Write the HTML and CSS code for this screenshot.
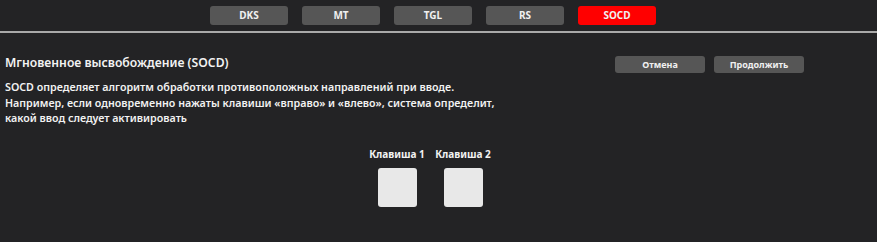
FILE: index.html
```html
<html>
<head>
  <link rel="stylesheet" href="styles.css">
</head>
<body>
  <div class="page">
    <div class="tabs">
      <div class="tab">DKS</div>
      <div class="tab">MT</div>
      <div class="tab">TGL</div>
      <div class="tab">RS</div>
      <div class="tab tab-active">SOCD</div>
    </div>
    <div class="divider"></div>
    <div class="header">
      <div class="title">Мгновенное высвобождение (SOCD)</div>
      <div class="actions">
        <button class="action-button">Отмена</button>
        <button class="action-button">Продолжить</button>
      </div>
    </div>
    <div class="description">
      SOCD определяет алгоритм обработки противоположных направлений при вводе.<br>
      Например, если одновременно нажаты клавиши «вправо» и «влево», система определит,<br>
      какой ввод следует активировать
    </div>
    <div class="keys">
      <div class="key">
        <div class="key-label">Клавиша 1</div>
        <div class="key-box"></div>
      </div>
      <div class="key">
        <div class="key-label">Клавиша 2</div>
        <div class="key-box"></div>
      </div>
    </div>
  </div>
</body>
</html>
```

FILE: styles.css
```css
* {
  box-sizing: border-box;
  margin: 0;
  padding: 0;
}

body {
  background-color: #232325;
  font-family: "Noto Sans", Arial, sans-serif;
  color: #f2f2f2;
}

.page {
  width: 877px;
  height: 242px;
  overflow: hidden;
}

.tabs {
  display: flex;
  gap: 14px;
  padding: 6px 0 0 210px;
  height: 31px;
}

.tab {
  width: 78px;
  height: 19px;
  border-radius: 3px;
  background-color: #565656;
  color: #f0f0f0;
  font-size: 10px;
  font-weight: 700;
  text-align: center;
  line-height: 19px;
}

.tab-active {
  background-color: #ff0000;
}

.divider {
  height: 2px;
  background-color: #a9a9a9;
}

.header {
  display: flex;
  justify-content: space-between;
  align-items: flex-start;
  padding: 20px 73px 0 5px;
  height: 42px;
}

.title {
  font-size: 12.2px;
  font-weight: 600;
  line-height: 20px;
}

.actions {
  display: flex;
  gap: 9px;
  margin-top: 3px;
}

.action-button {
  width: 90px;
  height: 17px;
  border: none;
  border-radius: 3px;
  background-color: #565656;
  color: #f0f0f0;
  font-family: "Noto Sans", Arial, sans-serif;
  font-size: 9px;
  font-weight: 700;
}

.description {
  padding: 5px 0 0 5px;
  font-size: 10.7px;
  font-weight: 600;
  line-height: 15.5px;
  height: 52px;
}

.keys {
  display: flex;
  gap: 14px;
  padding: 20px 0 0 371px;
}

.key {
  display: flex;
  flex-direction: column;
  align-items: center;
  width: 52px;
}

.key-label {
  font-size: 10px;
  font-weight: 700;
  line-height: 14px;
  white-space: nowrap;
}

.key-box {
  width: 39px;
  height: 39px;
  margin-top: 7px;
  border-radius: 3px;
  background-color: #e8e8e8;
}
```
